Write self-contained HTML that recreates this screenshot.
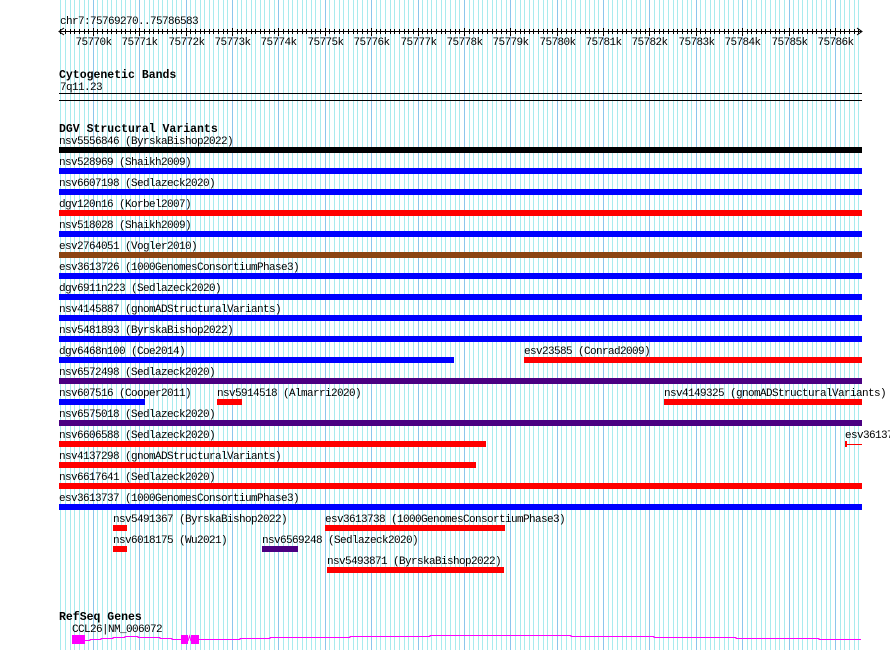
<!DOCTYPE html>
<html><head><meta charset="utf-8"><style>
html,body{margin:0;padding:0;background:#fff;}
svg{display:block;}
text{font-family:"Liberation Mono",monospace;font-size:11px;letter-spacing:-0.6px;fill:#000;}
.h{font-weight:bold;font-size:11.5px;letter-spacing:0;}
</style></head><body>
<svg id="s" width="890" height="650" xmlns="http://www.w3.org/2000/svg">
<g id="grid"></g>
<g id="ruler">
<text x="60" y="24">chr7:75769270..75786583</text>
<line x1="60" y1="31.5" x2="861" y2="31.5" stroke="#000"/>
<path d="M64 28 L59 31.5 L64 35 M857 28 L862 31.5 L857 35" stroke="#000" fill="none"/>
<g id="ticks" stroke="#000"></g>
<g id="tlabels"></g>
</g>
<text class="h" x="59" y="78">Cytogenetic Bands</text>
<text x="60" y="90">7q11.23</text>
<line x1="59" y1="93.5" x2="862" y2="93.5" stroke="#000"/>
<line x1="59" y1="100.5" x2="862" y2="100.5" stroke="#000"/>
<text class="h" x="59" y="132">DGV Structural Variants</text>
<g id="sv"></g>
<text class="h" x="59" y="620">RefSeq Genes</text>
<text x="72" y="632">CCL26|NM_006072</text>
<polyline fill="none" stroke="#ff00ff" stroke-width="1" points="85,640.5 90,640.5 90,639.5 101,639.5 101,638.5 113,638.5 113,637.5 125,637.5 125,636.5 138,636.5 138,637.5 160,637.5 160,638.5 172,638.5 172,639.5 181,639.5"/>
<polyline fill="none" stroke="#ff00ff" points="188,641 189.5,636 191,641"/>
<polyline fill="none" stroke="#ff00ff" points="199,639.5 240,639.5 240,638.5 270,638.5 270,637.5 350,637.5 350,636.5 430,636.5 430,635.5 571,635.5 571,636.5 654,636.5 654,637.5 736,637.5 736,638.5 819,638.5 819,639.5 861,639.5"/>
<rect x="72" y="635" width="13" height="9" fill="#ff00ff"/>
<rect x="181" y="635" width="7" height="9" fill="#ff00ff"/>
<rect x="191" y="635" width="8" height="9" fill="#ff00ff"/>
</svg>
<script>
var NS="http://www.w3.org/2000/svg";
function el(p,t,a,txt){var e=document.createElementNS(NS,t);for(var k in a)e.setAttribute(k,a[k]);if(txt)e.textContent=txt;p.appendChild(e);return e;}
var S=75769270,E=75786583,X0=59,W=803;
function px(b){return X0+(b-S)*W/(E-S);}
var g=document.getElementById('grid'),tk=document.getElementById('ticks'),tl=document.getElementById('tlabels');
for(var b=75769300;b<E;b+=100){
 var x=Math.round(px(b))+0.5, major=(b%1000==0);
 el(g,'line',{x1:x,y1:0,x2:x,y2:650,stroke:major?'#8cc6ec':'#a9ebee'});
 el(tk,'line',{x1:x,y1:major?28:29,x2:x,y2:major?36:34});
 if(major){el(tl,'text',{x:x,y:45,'text-anchor':'middle'},(b/1000)+'k');}
}
var rows=[
 [["nsv5556846 (ByrskaBishop2022)",59,862,"#000"]],
 [["nsv528969 (Shaikh2009)",59,862,"#0000ff"]],
 [["nsv6607198 (Sedlazeck2020)",59,862,"#0000ff"]],
 [["dgv120n16 (Korbel2007)",59,862,"#ff0000"]],
 [["nsv518028 (Shaikh2009)",59,862,"#0000ff"]],
 [["esv2764051 (Vogler2010)",59,862,"#8b4513"]],
 [["esv3613726 (1000GenomesConsortiumPhase3)",59,862,"#0000ff"]],
 [["dgv6911n223 (Sedlazeck2020)",59,862,"#0000ff"]],
 [["nsv4145887 (gnomADStructuralVariants)",59,862,"#0000ff"]],
 [["nsv5481893 (ByrskaBishop2022)",59,862,"#0000ff"]],
 [["dgv6468n100 (Coe2014)",59,454,"#0000ff"],["esv23585 (Conrad2009)",524,862,"#ff0000"]],
 [["nsv6572498 (Sedlazeck2020)",59,862,"#4b0082"]],
 [["nsv607516 (Cooper2011)",59,145,"#0000ff"],["nsv5914518 (Almarri2020)",217,242,"#ff0000"],["nsv4149325 (gnomADStructuralVariants)",664,862,"#ff0000"]],
 [["nsv6575018 (Sedlazeck2020)",59,862,"#4b0082"]],
 [["nsv6606588 (Sedlazeck2020)",59,486,"#ff0000"],["esv3613736 (1000GenomesConsortiumPhase3)",845,847,"#ff0000"]],
 [["nsv4137298 (gnomADStructuralVariants)",59,476,"#ff0000"]],
 [["nsv6617641 (Sedlazeck2020)",59,862,"#ff0000"]],
 [["esv3613737 (1000GenomesConsortiumPhase3)",59,862,"#0000ff"]],
 [["nsv5491367 (ByrskaBishop2022)",113,127,"#ff0000"],["esv3613738 (1000GenomesConsortiumPhase3)",325,505,"#ff0000"]],
 [["nsv6018175 (Wu2021)",113,127,"#ff0000"],["nsv6569248 (Sedlazeck2020)",262,298,"#4b0082"]],
 [["nsv5493871 (ByrskaBishop2022)",327,504,"#ff0000"]]
];
var sv=document.getElementById('sv');
rows.forEach(function(r,i){var top=147+21*i;r.forEach(function(f){
 el(sv,'text',{x:f[1],y:top-3},f[0]);
 el(sv,'rect',{x:f[1],y:top,width:f[2]-f[1],height:6,fill:f[3]});
});});
el(sv,'line',{x1:847,y1:444.5,x2:862,y2:444.5,stroke:'#ff0000'});
</script>
</body></html>
